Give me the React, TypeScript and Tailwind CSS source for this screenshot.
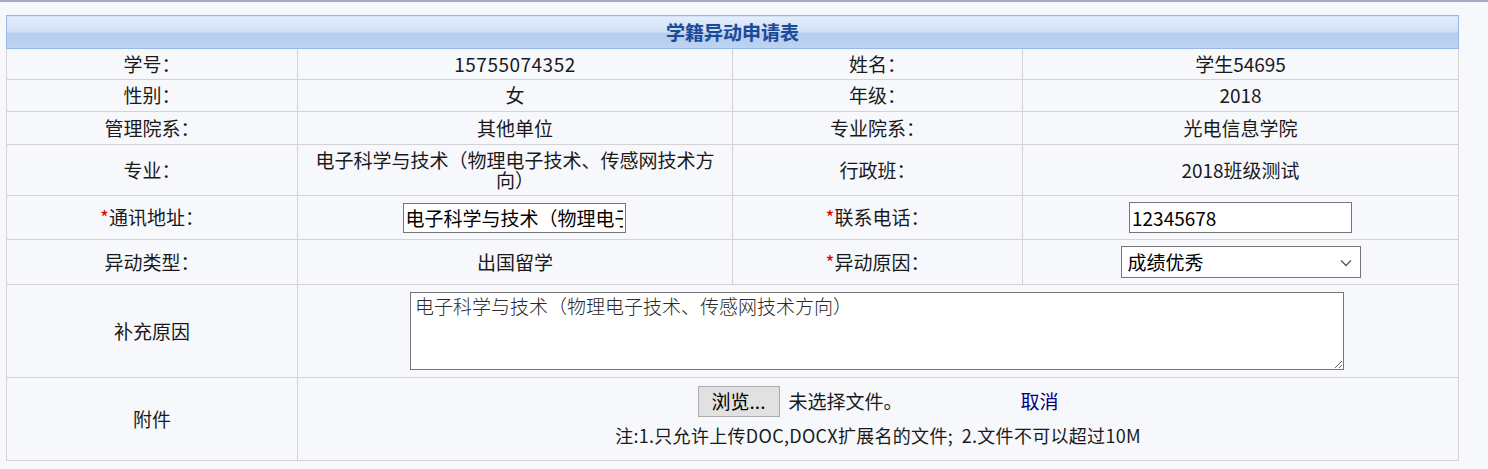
import React from 'react'

const font = { fontFamily: '"Noto Sans CJK SC", "Microsoft YaHei", sans-serif' }

const cell = 'border border-[#d3d3d6] text-center align-middle text-[19px] text-[#1a1a1a]'

function Star() {
  return <span className="text-[#e00000]">*</span>
}

export default function App() {
  return (
    <div className="min-h-[469px] w-[1488px] bg-[#f7f8fc]" style={font}>
      <div className="h-[2px] bg-[#a3abc6]" />
      <div className="pl-[6px] pt-[13px]">
        <table className="w-[1452px] table-fixed border-collapse">
          <colgroup>
            <col className="w-[291px]" />
            <col className="w-[435px]" />
            <col className="w-[290px]" />
            <col className="w-[436px]" />
          </colgroup>
          <tbody>
            <tr className="h-[33px]">
              <th
                colSpan={4}
                className="border border-[#97b9e7] bg-[linear-gradient(#e5eefa,#cfdff5_50%,#b4ccee_52%,#bdd3f1)] text-center text-[19px] font-bold text-[#1d4a98] [text-shadow:0_0_1px_#9fb7dd]"
              >
                学籍异动申请表
              </th>
            </tr>
            <tr className="h-[31px]">
              <td className={cell}>学号：</td>
              <td className={`${cell} tracking-[0.5px]`}>15755074352</td>
              <td className={cell}>姓名：</td>
              <td className={cell}>学生54695</td>
            </tr>
            <tr className="h-[32px]">
              <td className={cell}>性别：</td>
              <td className={cell}>女</td>
              <td className={cell}>年级：</td>
              <td className={cell}>2018</td>
            </tr>
            <tr className="h-[33px]">
              <td className={cell}>管理院系：</td>
              <td className={cell}>其他单位</td>
              <td className={cell}>专业院系：</td>
              <td className={cell}>光电信息学院</td>
            </tr>
            <tr className="h-[51px]">
              <td className={cell}>专业：</td>
              <td className={`${cell} px-4 leading-[20px]`}>电子科学与技术（物理电子技术、传感网技术方向）</td>
              <td className={cell}>行政班：</td>
              <td className={cell}>2018班级测试</td>
            </tr>
            <tr className="h-[44px]">
              <td className={cell}>
                <Star />
                通讯地址：
              </td>
              <td className={cell}>
                <div className="flex justify-center">
                  <input
                    readOnly
                    value="电子科学与技术（物理电子技术、传感网技术方向）"
                    className="ml-[-2px] h-[30px] w-[223px] border border-[#767676] bg-white px-[2px] text-[19px] text-black outline-none"
                    style={font}
                  />
                </div>
              </td>
              <td className={cell}>
                <Star />
                联系电话：
              </td>
              <td className={cell}>
                <div className="flex justify-center">
                  <input
                    readOnly
                    value="12345678"
                    className="h-[31px] w-[223px] border border-[#767676] bg-white px-[2px] text-[19px] text-black outline-none"
                    style={font}
                  />
                </div>
              </td>
            </tr>
            <tr className="h-[45px]">
              <td className={cell}>异动类型：</td>
              <td className={cell}>出国留学</td>
              <td className={cell}>
                <Star />
                异动原因：
              </td>
              <td className={cell}>
                <div className="flex justify-center">
                  <div className="relative flex h-[32px] w-[240px] items-center border border-[#767676] bg-white pl-[6px] text-left text-[19px] text-black">
                    成绩优秀
                    <svg
                      className="absolute right-[8px] top-[12px]"
                      width="12"
                      height="8"
                      viewBox="0 0 12 8"
                      fill="none"
                      stroke="#555"
                      strokeWidth="1.3"
                    >
                      <path d="M1 1.5 L6 6.5 L11 1.5" />
                    </svg>
                  </div>
                </div>
              </td>
            </tr>
            <tr className="h-[93px]">
              <td className={cell}>补充原因</td>
              <td colSpan={3} className={`${cell} pl-[112px] text-left`}>
                <textarea
                  readOnly
                  value="电子科学与技术（物理电子技术、传感网技术方向）"
                  className="block h-[78px] w-[934px] resize border border-[#767676] bg-white px-[4px] py-[1px] text-[19px] leading-[24px] text-[#2a2a2a] outline-none"
                  style={{ fontFamily: '"Noto Sans CJK SC", sans-serif', fontWeight: 300 }}
                />
              </td>
            </tr>
            <tr className="h-[83px]">
              <td className={cell}>附件</td>
              <td colSpan={3} className={`${cell} pb-[6px]`}>
                <div className="flex items-center justify-center">
                  <button className="h-[31px] w-[82px] border border-[#adadad] bg-[#e1e1e1] text-[19px] text-black" style={font}>
                    浏览...
                  </button>
                  <span className="ml-[9px] w-[232px] text-left">未选择文件。</span>
                  <a className="text-[#000080]">取消</a>
                </div>
                <div className="mt-[6px] text-[18px] leading-[24px] tracking-[0.3px]">
                  注:1.只允许上传DOC,DOCX扩展名的文件;&nbsp;&nbsp;2.文件不可以超过10M
                </div>
              </td>
            </tr>
          </tbody>
        </table>
      </div>
    </div>
  )
}
